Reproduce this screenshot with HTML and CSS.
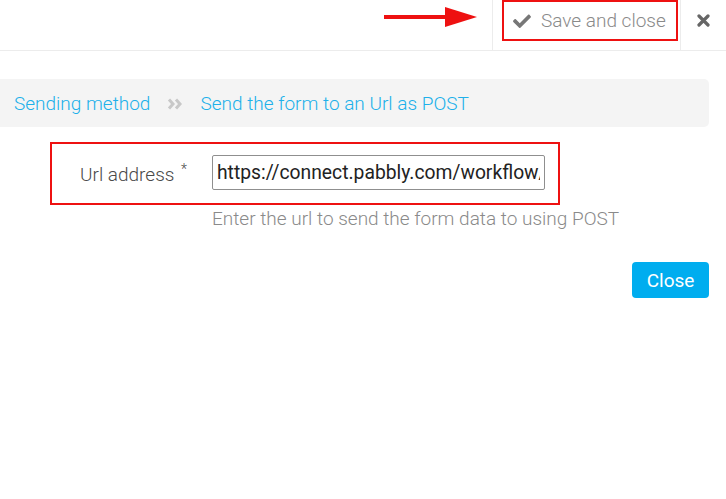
FILE: index.html
```html
<!DOCTYPE html>
<html lang="en">
<head>
    <meta charset="UTF-8">
    <title>Sending method</title>
    <link rel="stylesheet" href="styles.css">
</head>
<body>
    <!-- Barra superior -->
    <div class="topbar">
        <svg class="arrow" width="94" height="22" viewBox="0 0 94 22">
            <rect x="0" y="9" width="64" height="4" fill="#ee1111"/>
            <polygon points="61,1 93,11 61,21" fill="#ee1111"/>
        </svg>
        <div class="save-cell">
            <div class="save-btn">
                <svg class="check" width="18" height="14" viewBox="0 0 512 400">
                    <path d="M173.9 391.4l-166.4-166.4c-10-10-10-26.2 0-36.2l36.2-36.2c10-10 26.2-10 36.2 0L192 264.7 432.1 24.6c10-10 26.2-10 36.2 0l36.2 36.2c10 10 10 26.2 0 36.2l-294.4 294.4c-10 10-26.2 10-36.2 0z" fill="#777"/>
                </svg>
                <span>Save and close</span>
            </div>
        </div>
        <div class="close-cell">
            <svg width="13" height="13" viewBox="0 0 13 13">
                <path d="M2 2L11 11M11 2L2 11" stroke="#666" stroke-width="3.2" stroke-linecap="round"/>
            </svg>
        </div>
    </div>

    <!-- Ruta -->
    <div class="breadcrumb">
        <span class="crumb">Sending method</span>
        <svg class="sep" width="16" height="12" viewBox="0 0 16 12">
            <path d="M2 1.5L6 6L2 10.5M9 1.5L13 6L9 10.5" stroke="#c8c8c8" stroke-width="3" fill="none"/>
        </svg>
        <span class="crumb">Send the form to an Url as POST</span>
    </div>

    <!-- Formulario -->
    <div class="form-area">
        <div class="field-row">
            <label class="field-label" for="url">Url address <sup>*</sup></label>
            <input type="text" id="url" class="field-input" value="https://connect.pabbly.com/workflow/sendwebhookdata/IjU3NjEwNTZhMDYzNjA0MzI1MjZmIg_3D_3D_pc">
        </div>
        <div class="help">Enter the url to send the form data to using POST</div>
    </div>

    <div class="actions">
        <button class="btn-close">Close</button>
    </div>
</body>
</html>
```

FILE: styles.css
```css
body {
    margin: 0;
    font-family: Roboto, 'Liberation Sans', sans-serif;
    background: #ffffff;
    color: #333;
}

/* Barra superior */
.topbar {
    display: flex;
    justify-content: flex-end;
    align-items: stretch;
    height: 50px;
    border-bottom: 1px solid #ececec;
}

.arrow {
    flex: none;
    align-self: flex-start;
    margin-top: 6px;
    margin-right: 14px;
}

.save-cell {
    flex: none;
    display: flex;
    align-items: center;
    box-sizing: border-box;
    width: 188px;
    border-left: 1px solid #ececec;
    padding-left: 9px;
}

.save-btn {
    display: flex;
    align-items: center;
    gap: 10px;
    box-sizing: border-box;
    width: 176px;
    height: 41px;
    margin-top: -9px;
    padding-left: 9px;
    border: 2px solid #ee1111;
    color: #8a8a8a;
    font-size: 19px;
    font-weight: 300;
}

.close-cell {
    flex: none;
    display: flex;
    justify-content: center;
    align-items: flex-start;
    box-sizing: border-box;
    width: 46px;
    padding-top: 14px;
    border-left: 1px solid #ececec;
}

/* Ruta */
.breadcrumb {
    display: flex;
    align-items: center;
    gap: 17px;
    height: 48px;
    margin-top: 28px;
    margin-right: 17px;
    padding-left: 14px;
    background: #f4f4f4;
    border-radius: 0 5px 5px 0;
}

.crumb {
    color: #20b0ea;
    font-size: 19px;
    font-weight: 300;
}

.sep {
    margin-top: 1px;
}

/* Formulario */
.form-area {
    padding-left: 50px;
    margin-top: 15px;
}

.field-row {
    display: flex;
    align-items: center;
    box-sizing: border-box;
    width: 510px;
    height: 63px;
    border: 2px solid #ee1111;
}

.field-label {
    width: 142px;
    padding-left: 28px;
    box-sizing: border-box;
    color: #4a4a4a;
    font-size: 19px;
    font-weight: 300;
    margin-right: 18px;
}

.field-label sup {
    font-size: 14px;
    margin-left: 2px;
    vertical-align: 7px;
}

.field-input {
    box-sizing: border-box;
    width: 333px;
    height: 35px;
    margin-top: -2px;
    padding: 0 4px;
    border: 1px solid #8f8f8f;
    border-radius: 2px;
    font-family: Roboto, 'Liberation Sans', sans-serif;
    font-size: 19.3px;
    color: #222;
}

.help {
    margin-left: 162px;
    margin-top: 2px;
    color: #8a8a8a;
    font-size: 19px;
    font-weight: 300;
}

.actions {
    display: flex;
    justify-content: flex-end;
    margin-right: 17px;
    margin-top: 32px;
}

.btn-close {
    width: 77px;
    height: 36px;
    background: #00adef;
    color: #fff;
    border: none;
    border-radius: 4px;
    font-family: Roboto, 'Liberation Sans', sans-serif;
    font-size: 19px;
    cursor: pointer;
}
```
